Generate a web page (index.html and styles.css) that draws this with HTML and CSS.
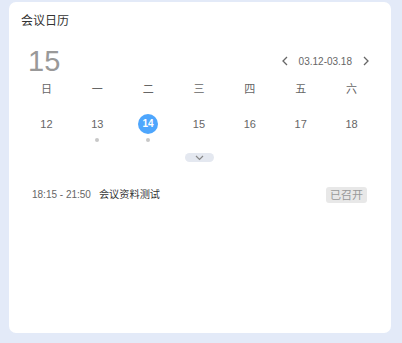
FILE: index.html
```html
<!DOCTYPE html>
<html lang="zh-CN">
  <head>
    <meta charset="UTF-8" />
    <meta name="viewport" content="width=device-width, initial-scale=1.0" />
    <title>会议日历</title>
    <link rel="stylesheet" href="styles.css">
  </head>
  <body>
    <div class="card">
      <h3 class="card-title">会议日历</h3>
      <div class="head">
        <span class="today">15</span>
        <div class="range">
          <svg class="arrow" width="8" height="10" viewBox="0 0 8 10"><path d="M6 1 L2 5 L6 9" fill="none" stroke="#666" stroke-width="1.3"/></svg>
          <span class="range-text">03.12-03.18</span>
          <svg class="arrow" width="8" height="10" viewBox="0 0 8 10"><path d="M2 1 L6 5 L2 9" fill="none" stroke="#666" stroke-width="1.3"/></svg>
        </div>
      </div>
      <div class="week">
        <span>日</span><span>一</span><span>二</span><span>三</span><span>四</span><span>五</span><span>六</span>
      </div>
      <div class="days">
        <div class="day"><span class="num">12</span></div>
        <div class="day"><span class="num">13</span><i class="dot"></i></div>
        <div class="day active"><span class="num">14</span><i class="dot"></i></div>
        <div class="day"><span class="num">15</span></div>
        <div class="day"><span class="num">16</span></div>
        <div class="day"><span class="num">17</span></div>
        <div class="day"><span class="num">18</span></div>
      </div>
      <div class="toggle">
        <span class="pill">
          <svg width="9" height="6" viewBox="0 0 9 6"><path d="M1 1 L4.5 4.5 L8 1" fill="none" stroke="#888" stroke-width="1.2"/></svg>
        </span>
      </div>
      <div class="event">
        <span class="time">18:15 - 21:50</span>
        <span class="name">会议资料测试</span>
        <span class="status">已召开</span>
      </div>
    </div>
  </body>
</html>
```
FILE: styles.css
```css
body {
  margin: 0;
  background-color: #e3eaf8;
  font-family: "Liberation Sans", "Noto Sans CJK SC", sans-serif;
  color: #333;
}
.card {
  margin: 2px 11px 0 9px;
  height: 331px;
  box-sizing: border-box;
  background-color: white;
  border-radius: 7px;
  padding: 11px 15px 0 12px;
}
.card-title {
  margin: 0;
  font-size: 12px;
  font-weight: normal;
  line-height: 16px;
  color: #333;
}
.head {
  display: flex;
  align-items: center;
  justify-content: space-between;
  margin-top: 15px;
  padding-left: 7px;
  height: 34px;
}
.today {
  font-size: 29px;
  color: #999;
  line-height: 34px;
}
.range {
  display: flex;
  align-items: center;
  gap: 10px;
  font-size: 10px;
  color: #666;
  margin-right: 6px;
}
.week,
.days {
  display: grid;
  grid-template-columns: repeat(7, 1fr);
  text-align: center;
  width: 356px;
}
.week {
  margin-top: 3px;
  font-size: 11px;
  color: #666;
  line-height: 16px;
}
.days {
  margin-top: 17px;
  font-size: 11px;
  color: #666;
}
.day {
  display: flex;
  flex-direction: column;
  align-items: center;
}
.num {
  width: 20px;
  height: 20px;
  line-height: 20px;
  border-radius: 50%;
}
.day.active .num {
  background-color: #4ea6fd;
  color: white;
  font-weight: bold;
  font-size: 10px;
}
.dot {
  width: 4px;
  height: 4px;
  border-radius: 50%;
  background-color: #c8c8c8;
  margin-top: 4px;
}
.toggle {
  width: 356px;
  display: flex;
  justify-content: center;
  margin-top: 11px;
}
.pill {
  display: flex;
  align-items: center;
  justify-content: center;
  width: 29px;
  height: 9px;
  border-radius: 5px;
  background-color: #e4e8f0;
}
.event {
  display: flex;
  align-items: center;
  margin-top: 25px;
  padding-left: 11px;
  padding-right: 9px;
  font-size: 10px;
  line-height: 16px;
}
.time {
  color: #666;
}
.name {
  margin-left: 8px;
  color: #333;
  font-size: 10.2px;
}
.status {
  margin-left: auto;
  background-color: #e8e8e8;
  color: #999;
  border-radius: 3px;
  padding: 0 4px;
  font-size: 11px;
}
```
